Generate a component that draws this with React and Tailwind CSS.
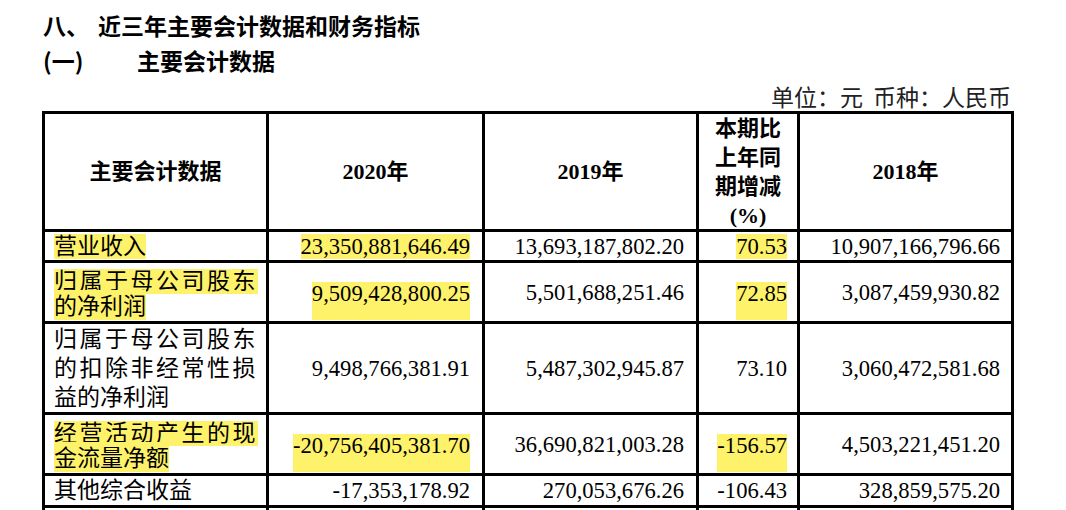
const HL = "bg-[#fff26b]"

const rows = [
  {
    label: ["营业收入"],
    kind: "single",
    hlLabel: true,
    values: ["23,350,881,646.49", "13,693,187,802.20", "70.53", "10,907,166,796.66"],
    hlValues: [0, 2],
  },
  {
    label: ["归属于母公司股东", "的净利润"],
    kind: "multi",
    hlLabel: true,
    values: ["9,509,428,800.25", "5,501,688,251.46", "72.85", "3,087,459,930.82"],
    hlValues: [0, 2],
  },
  {
    label: ["归属于母公司股东", "的扣除非经常性损", "益的净利润"],
    kind: "multi",
    hlLabel: false,
    values: ["9,498,766,381.91", "5,487,302,945.87", "73.10", "3,060,472,581.68"],
    hlValues: [],
  },
  {
    label: ["经营活动产生的现", "金流量净额"],
    kind: "multi",
    hlLabel: true,
    values: ["-20,756,405,381.70", "36,690,821,003.28", "-156.57", "4,503,221,451.20"],
    hlValues: [0, 2],
  },
  {
    label: ["其他综合收益"],
    kind: "single",
    hlLabel: false,
    values: ["-17,353,178.92", "270,053,676.26", "-106.43", "328,859,575.20"],
    hlValues: [],
  },
]

function LabelCell({ row }) {
  const { label, kind, hlLabel } = row

  // highlighted two-line labels: the marker boxes are stacked, second one reaches the cell bottom
  if (kind === "multi" && hlLabel) {
    return (
      <div className="bg-white flex flex-col justify-center pl-[9px] text-[23px]">
        {label.map((line, i) => {
          const isLast = i === label.length - 1
          return (
            <div key={i} className={isLast ? "h-[30px]" : "h-[25px]"}>
              <span
                className={`${HL} inline-block ${isLast ? "h-[30px] leading-[33px]" : "h-[25px] leading-[25px] tracking-[2.5px]"}`}
              >
                {line}
              </span>
            </div>
          )
        })}
      </div>
    )
  }

  return (
    <div className="bg-white flex flex-col justify-center pl-[9px] text-[23px]">
      {label.map((line, i) => {
        const justified = label.length > 1 && i < label.length - 1
        return (
          <div key={i} className="leading-[29px]">
            <span
              className={`inline-block ${hlLabel ? HL + " h-[25px] leading-[25px]" : ""} ${justified ? "tracking-[2.5px]" : ""}`}
            >
              {line}
            </span>
          </div>
        )
      })}
    </div>
  )
}

function ValueCell({ value, hl, kind, pr }) {
  if (hl && kind === "multi") {
    return (
      <div className={`bg-white flex items-end justify-end pb-[1px] ${pr}`}>
        <span className={`${HL} leading-[24px] pb-[14px]`}>{value}</span>
      </div>
    )
  }
  return (
    <div className={`bg-white flex items-center justify-end ${pr}`}>
      <span className={hl ? `${HL} inline-block h-[25px] leading-[25px]` : "leading-[25px]"}>{value}</span>
    </div>
  )
}

export default function App() {
  const pads = ["pr-[12px]", "pr-[12px]", "pr-[10px]", "pr-[11px]"]

  return (
    <div className="h-[510px] w-[1066px] overflow-hidden bg-white text-black font-['Liberation_Serif','Noto_Sans_CJK_SC',serif]">
      <div className="ml-[42px] w-[972px] pt-[8px]">
        <div className="pl-[1px] font-['Noto_Sans_CJK_SC',sans-serif] font-bold text-[23px] leading-[35px]">
          <div>
            <span className="inline-block w-[55px]">八、</span>
            <span>近三年主要会计数据和财务指标</span>
          </div>
          <div>
            <span className="inline-block w-[94px]">(一)</span>
            <span>主要会计数据</span>
          </div>
        </div>

        <div className="mt-[3px] pr-[3px] text-right text-[23px] leading-[30px] text-[#222] font-['Noto_Sans_CJK_SC',sans-serif]">
          单位：元<span className="ml-[10px]">币种：人民币</span>
        </div>

        <div className="grid grid-cols-[221px_213px_211px_98px_211px] grid-rows-[115px_28px_58px_88px_58px_29px_40px] gap-[3px] bg-black p-[3px] text-[22.6px]">
          {/* header */}
          <div className="bg-white flex items-center justify-center font-bold text-[22px]">主要会计数据</div>
          <div className="bg-white flex items-center justify-center font-bold text-[22px]">2020年</div>
          <div className="bg-white flex items-center justify-center font-bold text-[22px]">2019年</div>
          <div className="bg-white flex flex-col items-center justify-center font-bold text-[22px] leading-[29px]">
            <div>本期比</div>
            <div>上年同</div>
            <div>期增减</div>
            <div>(%)</div>
          </div>
          <div className="bg-white flex items-center justify-center font-bold text-[22px]">2018年</div>

          {rows.map((row, r) => (
            <div key={r} className="contents">
              <LabelCell row={row} />
              {row.values.map((v, c) => (
                <ValueCell key={c} value={v} hl={row.hlValues.includes(c)} kind={row.kind} pr={pads[c]} />
              ))}
            </div>
          ))}

          {/* next row, cut off by the page edge */}
          <div className="bg-white"></div>
          <div className="bg-white"></div>
          <div className="bg-white"></div>
          <div className="bg-white"></div>
          <div className="bg-white"></div>
        </div>
      </div>
    </div>
  )
}
